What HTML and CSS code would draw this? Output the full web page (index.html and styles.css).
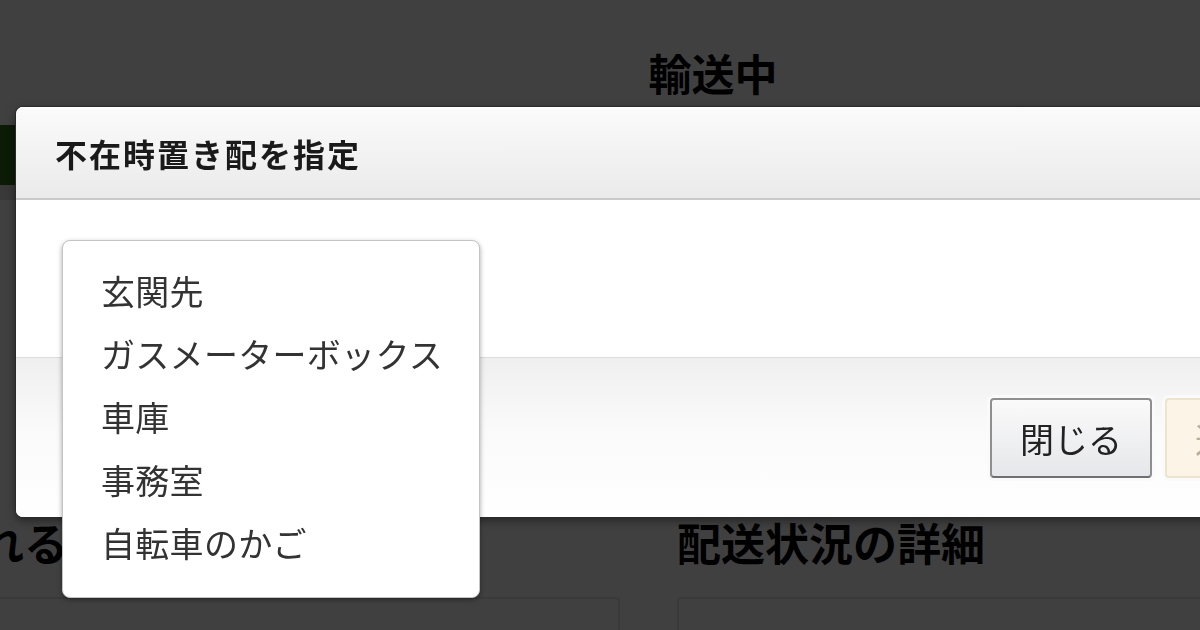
FILE: index.html
```html
<!DOCTYPE html>
<html lang="ja">
<head>
    <meta charset="UTF-8">
    <meta name="viewport" content="width=device-width, initial-scale=1.0">
    <title>輸送中</title>
    <link rel="stylesheet" href="styles.css">
</head>
<body>

    <div class="page">
        <h1 class="status-title">輸送中</h1>
        <div class="progress">
            <div class="progress-bar"></div>
        </div>
        <div class="progress-steps"></div>

        <div class="columns">
            <div class="column">
                <h2>受け取れる場所</h2>
                <div class="panel"></div>
            </div>
            <div class="column">
                <h2>配送状況の詳細</h2>
                <div class="panel"></div>
            </div>
        </div>
    </div>

    <div class="overlay"></div>

    <div class="modal">
        <div class="modal-header">
            <h3>不在時置き配を指定</h3>
        </div>
        <div class="modal-body"></div>
        <div class="modal-footer">
            <button class="btn">閉じる</button>
            <button class="btn btn-primary">送信する</button>
        </div>
    </div>

    <!-- 置き場所の選択肢 -->
    <ul class="dropdown">
        <li>玄関先</li>
        <li>ガスメーターボックス</li>
        <li>車庫</li>
        <li>事務室</li>
        <li>自転車のかご</li>
    </ul>

</body>
</html>
```

FILE: styles.css
```css
body {
    margin: 0;
    background-color: #fff;
    color: #000;
    font-family: "Noto Sans CJK JP", "Noto Sans", sans-serif;
    overflow: hidden;
    height: 630px;
}
.page {
    width: 1730px;
    margin-left: -152px;
}
.status-title {
    margin: 0;
    padding-top: 44px;
    font-size: 43px;
    line-height: 56px;
    font-weight: 700;
    text-align: center;
}
.progress {
    margin-top: 25px;
    height: 60px;
    background-color: #ececec;
}
.progress-bar {
    width: 300px;
    height: 100%;
    background-color: #2c6c16;
}
.progress-steps {
    height: 15px;
    background-color: #e2e2e2;
}
.columns {
    display: grid;
    grid-template-columns: 772px 1fr;
    column-gap: 57px;
    margin-top: 312px;
}
.column h2 {
    margin: 0 0 25px 0;
    font-size: 44px;
    line-height: 60px;
    font-weight: 700;
    white-space: nowrap;
}
.panel {
    height: 200px;
    border: 2px solid #e6e6e6;
    border-radius: 4px;
}
.overlay {
    position: fixed;
    inset: 0;
    background-color: rgba(0, 0, 0, 0.75);
}
.modal {
    position: absolute;
    left: 16px;
    top: 107px;
    width: 1340px;
    background-color: #fff;
    border-radius: 7px;
    box-shadow: 0 0 0 1px #2a2a2a, 0 3px 10px rgba(0, 0, 0, 0.5);
    overflow: hidden;
}
.modal-header {
    height: 91px;
    display: flex;
    align-items: center;
    padding-left: 39px;
    background: linear-gradient(#fbfbfb, #eaeaea);
    border-bottom: 2px solid #c9c9c9;
    box-shadow: inset 0 1px 0 #fff;
}
.modal-header h3 {
    margin: 0;
    font-size: 32px;
    font-weight: 700;
    color: #1a1a1a;
    letter-spacing: 2px;
}
.modal-body {
    height: 157px;
    border-bottom: 1px solid #dcdcdc;
}
.modal-footer {
    height: 159px;
    box-sizing: border-box;
    padding: 40px 0 0 974px;
    display: flex;
    align-items: flex-start;
    gap: 13px;
    background: linear-gradient(#efefef, #fafafa 45%, #fff);
}
.btn {
    flex-shrink: 0;
    height: 80px;
    padding: 0 28px;
    border: 2px solid #8f8f8f;
    border-bottom-color: #6f6f6f;
    border-radius: 4px;
    background: linear-gradient(#fafafa, #e6e7ea);
    color: #222;
    font-family: inherit;
    font-size: 34px;
    white-space: nowrap;
    box-shadow: 0 0 0 3px #fafafa;
}
.btn-primary {
    border-color: #eee3cc;
    background: #fcf4e6;
    color: #b9ae98;
}
.dropdown {
    position: absolute;
    left: 62px;
    top: 240px;
    width: 418px;
    height: 358px;
    box-sizing: border-box;
    margin: 0;
    padding: 18px 0 0 38px;
    list-style: none;
    background-color: #fff;
    border: 1px solid #c4c4c4;
    border-radius: 8px;
    box-shadow: 0 2px 5px rgba(0, 0, 0, 0.35);
}
.dropdown li {
    font-size: 34px;
    line-height: 63px;
    color: #333;
    letter-spacing: 0.3px;
    white-space: nowrap;
}
```
